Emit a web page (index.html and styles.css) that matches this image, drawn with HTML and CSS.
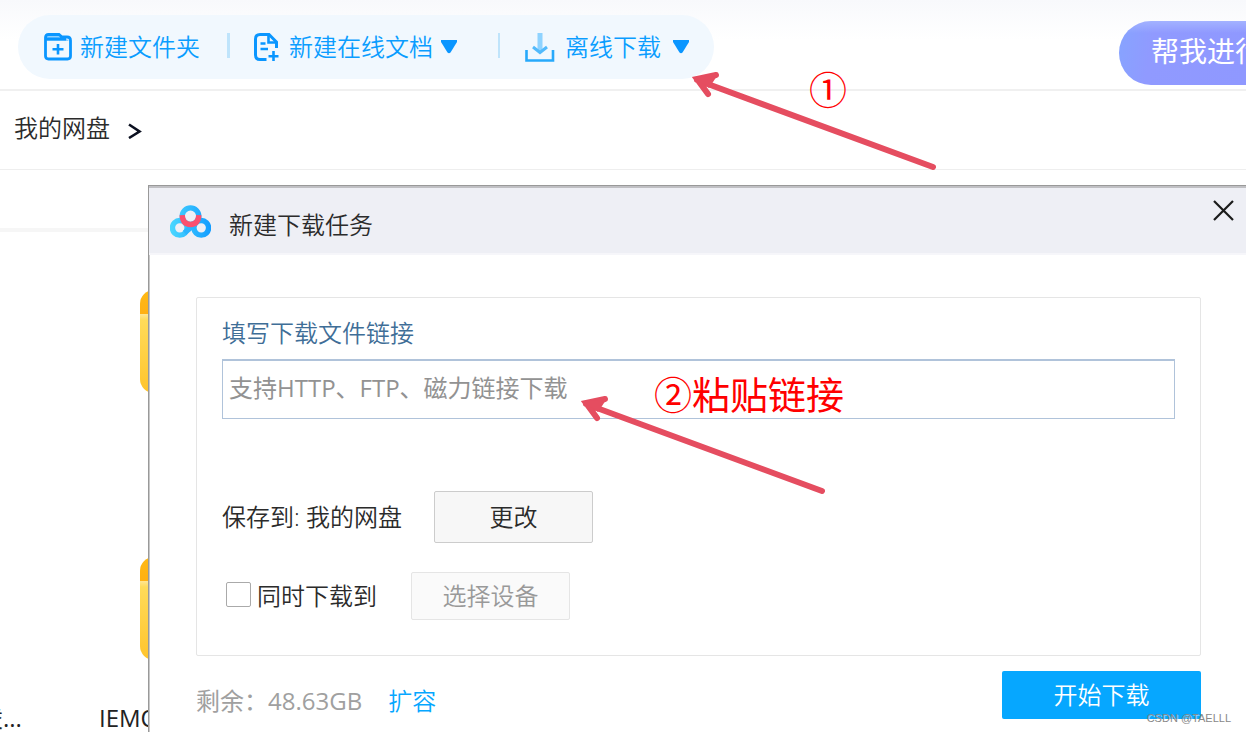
FILE: index.html
```html
<!DOCTYPE html>
<html lang="zh-CN">
<head>
<meta charset="utf-8">
<title>新建下载任务</title>
<link rel="stylesheet" href="styles.css">
</head>
<body>
<div class="app">
  <header class="topbar">
    <nav class="toolbar">
      <button class="tool" type="button">
        <svg class="tool-icon folder-icon" width="28" height="28" viewBox="0 0 28 28" fill="none" stroke="#0a96ff">
          <path d="M3 5Q3 2 6 2H14L18 5H22L25 8H3Z" fill="#8fd0ff" stroke="none"/>
          <path d="M1.500 8V4.500Q1.500 1.500 4.500 1.500H15L18 4H23Q26.500 4 26.500 7.500V23Q26.500 26 23.500 26H4.500Q1.500 26 1.500 23V6H22" stroke-width="2.800"/>
          <path d="M14 11V21.500M8.500 16.200H19.500" stroke-width="2.600"/>
        </svg>
        新建文件夹
      </button>
      <span class="divider"></span>
      <button class="tool" type="button">
        <svg class="tool-icon" width="25" height="29" viewBox="0 0 25 29" fill="none" stroke="#0a96ff">
          <path d="M12.500 26.500H6Q1.500 26.500 1.500 22V6Q1.500 1.500 6 1.500H15L22.500 9V15" stroke-width="3"/>
          <path d="M14.500 2V9.500H22.500" stroke-width="2.600"/>
          <path d="M6.500 10.500H11.500M6.500 16H14" stroke-width="2.400"/>
          <path d="M19.500 18V28M14.500 23.200H24.500" stroke-width="2.600"/>
        </svg>
        新建在线文档
        <svg class="caret" width="16" height="14" viewBox="0 0 16 14"><path d="M0 0H16V2L9.500 12.500Q8 14 6.500 12.500L0 2Z" fill="#0a96ff"/></svg>
      </button>
      <span class="divider thin"></span>
      <button class="tool" type="button">
        <svg class="tool-icon" width="30" height="29" viewBox="0 0 30 29" fill="none">
          <path d="M15 0V18" stroke="#8fd3ff" stroke-width="5"/>
          <path d="M8 14L15 19.500L22 14" stroke="#52bafc" stroke-width="3"/>
          <path d="M1.500 17V27.500H28V17" stroke="#27a9fb" stroke-width="2.600"/>
        </svg>
        离线下载
        <svg class="caret wide" width="16" height="14" viewBox="0 0 16 14"><path d="M0 0H16V2L9.500 12.500Q8 14 6.500 12.500L0 2Z" fill="#0a96ff"/></svg>
      </button>
    </nav>
    <button class="assist" type="button">帮我进行</button>
  </header>
  <nav class="crumbs">
    <a class="crumb" href="#">我的网盘</a>
    <svg width="14" height="17" viewBox="0 0 14 17" fill="none" stroke="#0b1020" stroke-width="2.600"><path d="M1 2.500L11.500 9.500L1 16"/></svg>
  </nav>
  <div class="list-head"></div>
  <main class="files">
    <div class="folder"></div>
    <div class="folder"></div>
    <div class="names"><span class="cut">凌...</span><span>IEMOCAP</span></div>
  </main>

  <section class="dialog" role="dialog" aria-labelledby="dialog-title">
    <div class="dialog-head">
      <svg class="logo" width="41" height="34" viewBox="0 0 42 34" fill="none" stroke-width="5.500">
        <defs>
          <linearGradient id="sky" x1="0" x2="42" y1="0" y2="0" gradientUnits="userSpaceOnUse"><stop offset="0" stop-color="#4bd8ff"/><stop offset="1" stop-color="#129cff"/></linearGradient>
        </defs>
        <circle cx="21" cy="11" r="8.500" stroke="url(#sky)"/>
        <circle cx="10" cy="23" r="7.500" stroke="url(#sky)"/>
        <circle cx="32" cy="23" r="7.500" stroke="url(#sky)"/>
        <path d="M15 28L26 19" stroke="#2bb4ff"/>
        <path d="M12.500 10Q13 19.500 21 19.500T29.500 10" stroke="#fb4f6f"/>
      </svg>
      <h1 class="dialog-title" id="dialog-title">新建下载任务</h1>
      <button class="close" type="button" aria-label="关闭">
        <svg width="21" height="21" viewBox="0 0 21 21" fill="none" stroke="#1b1b1b" stroke-width="2.200"><path d="M1 1L20 20M20 1L1 20"/></svg>
      </button>
    </div>
    <form class="dialog-body">
      <div class="panel">
        <label class="link-label" for="link">填写下载文件链接</label>
        <input class="link-input" id="link" type="text" placeholder="支持HTTP、FTP、磁力链接下载">
        <div class="row">
          <span>保存到: 我的网盘</span>
          <button class="btn" type="button">更改</button>
        </div>
        <div class="row device">
          <label class="check"><input class="box" type="checkbox">同时下载到</label>
          <button class="btn muted" type="button" disabled>选择设备</button>
        </div>
      </div>
      <div class="foot">
        <span class="quota">剩余：48.63GB</span>
        <a class="expand" href="#">扩容</a>
        <button class="start" type="button">开始下载</button>
      </div>
    </form>
  </section>

  <svg class="arrow arrow-one" width="250" height="100" viewBox="0 0 250 100"><path d="M7 10L243 97M26 5L7 9L18 24" /><path class="tip" d="M3 7L27 6L19 18Z"/></svg>
  <svg class="arrow arrow-two" width="250" height="100" viewBox="0 0 250 100"><path d="M7 10L243 97M26 5L7 9L18 24" /><path class="tip" d="M3 7L27 6L19 18Z"/></svg>
  <span class="note note-one">①</span>
  <span class="note note-two">②粘贴链接</span>
  <span class="watermark">CSDN @TAELLL</span>
</div>
</body>
</html>
```
FILE: styles.css
```css
* { box-sizing: border-box; }
body {
  margin: 0;
  background: #fff;
  color: #2b2b2b;
  font: 350 24px/32px "Open Sans", "Noto Sans CJK SC", sans-serif;
}
button, input { font: inherit; color: inherit; }
button { padding: 0; border: 0; background: none; }
a { color: inherit; text-decoration: none; }
svg { flex: none; }
.app { position: relative; height: 100vh; overflow: hidden; }

.topbar {
  display: flex;
  justify-content: space-between;
  height: 91px;
  padding: 15px 0 0 18px;
  border-bottom: 2px solid #f0f0f0;
  background: linear-gradient(#f8f9fc, #fff 40px);
}
.toolbar {
  display: flex;
  align-items: center;
  height: 64px;
  padding: 0 25px 0 26px;
  border-radius: 32px;
  background: #f1f8fe;
  color: #0a9dff;
}
.tool { display: flex; align-items: center; gap: 8px; white-space: nowrap; }
.tool-icon { margin-right: 2px; }
.folder-icon { margin-right: 0; }
.caret.wide { margin-left: 4px; }
.divider { width: 3px; height: 25px; margin: -4px 24px 0 27px; background: #bfe4fb; }
.divider.thin { width: 2px; margin: -4px 25px 0 41px; }
.assist {
  flex: none;
  width: 127px;
  height: 64px;
  margin-top: 6px;
  padding: 0 0 4px 32px;
  overflow: hidden;
  border-radius: 32px 0 0 32px;
  background: linear-gradient(#a3b2ff, transparent 12px), linear-gradient(100deg, #86a4ff, #909aff 36px, #8f98ff);
  color: #fff;
  font-size: 28px;
  font-weight: 400;
  text-align: left;
  white-space: nowrap;
}

.crumbs {
  display: flex;
  align-items: center;
  gap: 18px;
  height: 79px;
  padding: 0 14px;
  border-bottom: 1px solid #eee;
}
.crumb { margin-bottom: 4px; }
.list-head { height: 62px; border-bottom: 4px solid #f6f6f6; }
.files { padding: 58px 0 0 140px; }
.folder {
  width: 124px;
  height: 103px;
  margin-bottom: 164px;
  border-radius: 14px;
  background: linear-gradient(#ffba14, #ffb013 24px, #ffe694 24px, #ffdb59 30px, #ffc42c);
}
.folder + .folder { margin-bottom: 42px; }
.names { display: flex; gap: 77px; margin-left: -161px; color: #222; font-weight: 400; }

.dialog {
  position: absolute;
  top: 185px;
  right: 0;
  left: 148px;
  border: solid #999;
  border-width: 1px 0 0 1px;
  background: #fff;
  box-shadow: inset 1px 0 #c8c8c8;
}
.dialog-head {
  display: flex;
  align-items: flex-start;
  height: 69px;
  padding: 17px 12px 0 21px;
  border-top: 2px solid #c0c0c4;
  border-bottom: 2px solid #f6f6fa;
  background: #eeeff5;
}
.dialog-title { flex: 1; margin: 4px 0 0 18px; font-size: 24px; font-weight: 350; }
.close { display: flex; margin-top: -5px; }
.dialog-body { padding: 42px 45px 40px 47px; }
.panel {
  height: 359px;
  padding: 19px 25px;
  border: 1px solid #e5e5e5;
  border-radius: 2px;
}
.link-label { display: block; color: #3f6e97; }
.link-input {
  display: block;
  width: 100%;
  height: 60px;
  margin: 10px 0 72px;
  padding: 0 6px 4px;
  border: 1px solid #b0c3da;
  border-top-width: 2px;
  outline: 0;
  font-weight: 400;
}
.link-input::placeholder { color: #929292; opacity: 1; }
.row { display: flex; align-items: center; gap: 32px; }
.btn {
  width: 159px;
  height: 52px;
  border: 1px solid #ccc;
  border-radius: 2px;
  background: #f7f7f7;
}
.device { gap: 34px; margin-top: 29px; }
.check { display: flex; align-items: center; gap: 6px; }
.box {
  appearance: none;
  width: 25px;
  height: 25px;
  margin: -3px 0 0 4px;
  border: 1px solid #aaa;
  border-radius: 2px;
  background: #fff;
}
.btn.muted { height: 48px; border-color: #e5e5e5; background: #fafafa; color: #999; }
.foot { display: flex; align-items: flex-end; gap: 26px; margin-top: 15px; }
.quota, .expand { padding-bottom: 2px; }
.quota { color: #a0a0a0; font-weight: 400; }
.expand { color: #06a7ff; }
.start {
  width: 199px;
  height: 48px;
  margin-left: auto;
  border-radius: 2px;
  background: #06a7ff;
  color: #fff;
}

.arrow { position: absolute; overflow: visible; fill: none; stroke: #e54d60; stroke-width: 6; stroke-linecap: round; }
.arrow .tip { fill: #e54d60; stroke: none; }
.arrow-one { top: 70px; left: 690px; }
.arrow-two { top: 394px; left: 579px; }
.note { position: absolute; color: #f00; font-size: 38px; font-weight: 400; line-height: 48px; white-space: nowrap; }
.note-one { top: 65px; left: 809px; }
.note-two { top: 370px; left: 654px; }
.watermark {
  position: absolute;
  right: 15px;
  bottom: 6px;
  color: #888;
  font: 11px/16px "Liberation Sans", sans-serif;
  text-shadow: 1px 1px #fff8;
}
```
